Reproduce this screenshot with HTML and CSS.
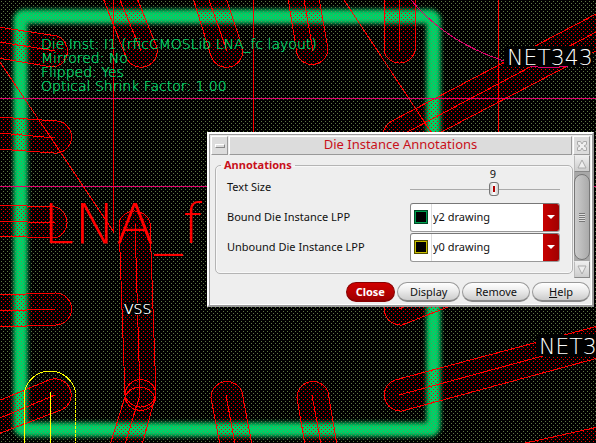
FILE: index.html
```html
<!DOCTYPE html>
<html lang="en">
<head>
<meta charset="utf-8">
<title>Die Instance Annotations</title>
<link rel="stylesheet" href="styles.css">
</head>
<body>
<main class="layout-canvas">
  <svg class="drawing" aria-hidden="true">
    <defs>
      <pattern id="dots" width="4" height="4" patternUnits="userSpaceOnUse"><path class="dot" d="M1 1h1v1H1zM3 3h1v1H3z"/></pattern>
      <pattern id="red-dots" width="4" height="4" patternUnits="userSpaceOnUse"><path class="dot-red" d="M1 1h1v1H1zM3 3h1v1H3z"/></pattern>
      <filter id="soft" x="-5%" y="-5%" width="110%" height="110%"><feGaussianBlur stdDeviation="2"/></filter>
    </defs>
    <rect class="die-edge" x="20.5" y="16.5" width="413" height="413" rx="3"/>
    <rect class="grid" width="100%" height="100%"/>
    <g class="pad">
      <path d="M-2 27L57 36A16 16 0 0 1 52 67L-2 58"/>
      <path d="M-2 117L57 121A16 16 0 0 1 54 153L-2 149"/>
      <path d="M-2 205L55 207A16 16 0 0 1 55 238L-2 236"/>
      <path d="M-2 295L55 293A16 16 0 0 1 56 325L-2 327"/>
      <path d="M-2 401L49 380A16 16 0 0 1 61 410L-2 434"/>
      <path d="M103 -2L126 57A16 16 0 0 0 156 45L137 -2"/>
      <path d="M193 -2L211 56A16 16 0 0 0 242 46L226 -2"/>
      <path d="M288 -2L297 54A16 16 0 0 0 328 49L319 -2"/>
      <path d="M384 -2V51A16 16 0 0 0 415 51V-2"/>
      <path d="M392 121L598 13V50L407 150A16 16 0 0 1 392 121"/>
      <path d="M119 223A16 16 0 0 1 150 223L156 395A16 16 0 0 1 125 395Z"/>
      <path d="M110 445L125 397A16 16 0 0 1 155 398L142 445"/>
      <path d="M220 445L211 398A16 16 0 0 1 242 392L252 445"/>
      <path d="M305 445L297 398A16 16 0 0 1 328 392L337 445"/>
      <path d="M395 294A16 16 0 0 0 402 325L453 305V280"/>
      <path d="M598 326L395 380A16 16 0 0 0 402 411L598 358"/>
      <path d="M521 444L598 427V445"/>
    </g>
    <g class="wire">
      <path d="M0 42L55 51M0 133L55 138M0 221L55 223M0 311L55 309M0 418L55 395"/>
      <path d="M120 0L141 51M209 0L227 51M304 0L313 51M399 0V51"/>
      <path d="M0 62L59 150L113 231V0M253.500 0V135M498.500 0V135M344 0L431 132"/>
      <path d="M398 137L598 31M399 309L453 288M399 395L598 341"/>
      <path d="M135 223L140 395L125 444M226 395L235 444M312 395L321 444"/>
      <circle cx="140.500" cy="395" r="15.500"/>
    </g>
    <g class="net">
      <path d="M0 98.500H596M0 186.500H596M411 0Q446 42 504 61M530 66.500Q548 68 568 66.500"/>
    </g>
    <g class="bump">
      <path d="M24.500 443V392A26 26 0 0 1 75.500 392M50.500 392V443"/>
      <path class="dashed" d="M75.500 390V443"/>
    </g>
    <text class="cell-name" x="43" y="243">LNA_f</text>
    <path class="backing" d="M504 46h88v20h-88zM536 335h62v21h-62zM124 303h26v12h-26z"/>
    <text class="net-name" x="507" y="65">NET343</text>
    <text class="net-name" x="539" y="354">NET343</text>
    <text class="pin-name" x="124" y="314">VSS</text>
  </svg>

  <div class="die-notes">
    <div>Die Inst: I1 (rficCMOSLib LNA_fc layout)</div>
    <div>Mirrored: No</div>
    <div>Flipped: Yes</div>
    <div>Optical Shrink Factor: 1.00</div>
  </div>

  <form class="dialog">
    <header class="titlebar">
      <button type="button" class="title-button" aria-label="Window menu"><span class="dash"></span></button>
      <h1>Die Instance Annotations</h1>
      <button type="button" class="title-button" aria-label="Dismiss"><svg width="12" height="12" viewBox="0 0 12 12"><path class="x-shade" d="M1.500 1.500h3L6 4l1.500-2.500h3v3L8 6l2.500 1.500v3h-3L6 8l-1.500 2.500h-3v-3L4 6 1.500 4.500z"/></svg></button>
    </header>
    <div class="dialog-body">
      <fieldset>
        <legend>Annotations</legend>
        <div class="row">
          <label for="size">Text Size</label>
          <div class="slider"><output for="size">9</output><input id="size" type="range" min="0" max="16" value="9"></div>
        </div>
        <div class="row">
          <label for="bound">Bound Die Instance LPP</label>
          <div class="combo"><span class="swatch swatch-green"></span><select id="bound"><option>y2 drawing</option></select><span class="arrow"></span></div>
        </div>
        <div class="row">
          <label for="unbound">Unbound Die Instance LPP</label>
          <div class="combo"><span class="swatch swatch-yellow"></span><select id="unbound"><option>y0 drawing</option></select><span class="arrow"></span></div>
        </div>
      </fieldset>
      <div class="scrollbar">
        <button type="button" aria-label="Scroll up"><svg width="10" height="10"><path class="tri" d="M5 1L9 9H1z"/></svg></button>
        <div class="track"><div class="thumb"><i></i></div></div>
        <button type="button" aria-label="Scroll down"><svg width="10" height="10"><path class="tri" d="M1 1H9L5 9z"/></svg></button>
      </div>
    </div>
    <footer>
      <button type="button" class="pill primary">Close</button>
      <button type="button" class="pill">Display</button>
      <button type="button" class="pill">Remove</button>
      <button type="button" class="pill"><u>H</u>elp</button>
    </footer>
  </form>
</main>
</body>
</html>
```

FILE: styles.css
```css
* { box-sizing: border-box; }
body { margin: 0; background: #000; font: 11px/16px "Noto Sans", sans-serif; color: #111; }
button, select { font: inherit; color: inherit; }
.layout-canvas { position: relative; height: 100vh; overflow: hidden; }

/* Layout drawing */
.drawing { position: absolute; inset: 0; width: 100%; height: 100%; }
.dot { fill: #6e8a50; shape-rendering: crispEdges; }
.dot-red { fill: #f00000; shape-rendering: crispEdges; }
.grid { fill: url(#dots); opacity: .85; }
.die-edge { fill: none; stroke: #00d068; stroke-width: 14; filter: url(#soft); }
.pad { fill: url(#red-dots); stroke: #f00; shape-rendering: crispEdges; }
.wire { fill: none; stroke: #f00; shape-rendering: crispEdges; }
.net { fill: none; stroke: #e0006c; shape-rendering: crispEdges; }
.bump { fill: none; stroke: #ff0; shape-rendering: crispEdges; }
.dashed { stroke-dasharray: 3 1; }
.backing { fill: #000; }
.cell-name { font: 200 56px "DejaVu Sans Light", "DejaVu Sans", sans-serif; fill: #f00; }
.net-name { font: 200 22px "DejaVu Sans Light", "DejaVu Sans", sans-serif; fill: #fff; }
.pin-name { font: 200 14px "DejaVu Sans Light", "DejaVu Sans", sans-serif; fill: #fff; text-shadow: 0 0 #fff; }
.die-notes { position: absolute; left: 41px; top: 37px; font: 200 14px/14px "DejaVu Sans Light", "DejaVu Sans", sans-serif; color: #00d068; text-shadow: 0 0 #00d068; white-space: nowrap; }

/* Dialog window */
.dialog { position: absolute; left: 207px; top: 132px; width: 387px; background: #eee; border: 2px solid; border-color: #fff #999 #999 #fff; box-shadow: inset 1px 1px #999, inset -1px -1px #fff; padding: 2px 2px 3px; }
.titlebar { display: flex; height: 19px; gap: 1px; background: #eee; }
.titlebar h1 { flex: 1; margin: 0; font-size: 13px; font-weight: 400; line-height: 15px; text-align: center; color: #c8101a; background: #dcdcdc; border: 1px solid; border-color: #fff #999 #999 #fff; }
.title-button { width: 17px; padding: 0; display: grid; place-items: center; background: #dcdcdc; border: 1px solid; border-color: #fff #999 #999 #fff; }
.dash { width: 10px; height: 4px; border: 1px solid; border-color: #fff #888 #888 #fff; }
.x-shade { fill: #eee; stroke: #aaa; }
.dialog-body { display: flex; gap: 1px; }
fieldset { flex: 1; min-width: 0; margin: 2px 0 4px 4px; border: 1px solid #b4b4b4; border-radius: 5px; padding: 0 12px 8px 11px; box-shadow: inset 0 0 0 1px #f8f8f8; }
legend { margin-left: -6px; padding: 0 3px; font-weight: 700; color: #c8101a; }
.row { display: grid; grid-template-columns: 1fr 150px; align-items: center; height: 30px; }
.row:first-of-type { margin-top: -1px; }
.slider { position: relative; height: 30px; }
.slider output { display: block; height: 12px; line-height: 12px; text-align: center; padding-left: 16px; margin-top: -4px; }
.slider input { display: block; appearance: none; width: 100%; height: 16px; margin: 1px 0 0; background: linear-gradient(#aaa, #aaa) center / 100% 1px no-repeat; }
.slider input::-webkit-slider-thumb { appearance: none; width: 10px; height: 14px; border: 1px solid #777; border-radius: 3px; background: linear-gradient(#b00000, #b00000) center / 2px 6px no-repeat, linear-gradient(90deg, #ccc, #fff, #ccc); }
.combo { display: flex; align-items: center; height: 29px; background: #fff; border: 1px solid; border-color: #777 #999 #999 #888; border-radius: 3px; overflow: hidden; }
.swatch { width: 14px; height: 14px; margin: 0 3px; background: #000; border: 1px solid; flex: none; }
.swatch-green { border-color: #004a26; box-shadow: inset 0 0 0 1px #00a050; }
.swatch-yellow { border-color: #555000; box-shadow: inset 0 0 0 1px #c8be00; }
.combo select { flex: 1; min-width: 0; height: 100%; appearance: none; border: 0; border-left: 1px solid #ddd; background: #fff; padding: 0 1px; }
.arrow { width: 16px; height: 100%; background: linear-gradient(90deg, #c80000, #a00000); display: grid; place-items: center; }
.arrow::after { content: ""; border: 4px solid transparent; border-top-color: #fff; border-bottom: 0; }
.scrollbar { display: flex; flex-direction: column; width: 16px; height: 123px; background: #ccc; }
.scrollbar button { height: 17px; padding: 0; border: 1px solid; border-color: #eee #888 #888 #bbb; background: linear-gradient(#eee, #ccc); display: grid; place-items: center; }
.tri { fill: #eee; stroke: #aaa; }
.track { flex: 1; padding: 2px 0 1px; background: #a8a8a8; }
.thumb { height: 100%; border: 1px solid #777; border-radius: 8px; background: linear-gradient(90deg, #ccc, #aaa); display: grid; place-items: center; }
.thumb i { width: 6px; height: 9px; background: repeating-linear-gradient(#777 0 1px, #ddd 1px 2px); }
footer { display: flex; justify-content: flex-end; gap: 2px; padding: 4px 0 0; }
.pill { height: 20px; padding: 0 12px; line-height: 16px; border: 1px solid #999; border-bottom: 2px solid #888; border-radius: 10px; background: linear-gradient(#fff, #eee 40%, #ccc); }
.primary { padding: 0 9px; font-weight: 700; color: #fff; border-color: #800; background: linear-gradient(#d00000, #a00000); }
.pill:last-child { padding: 0 16px; }
```
